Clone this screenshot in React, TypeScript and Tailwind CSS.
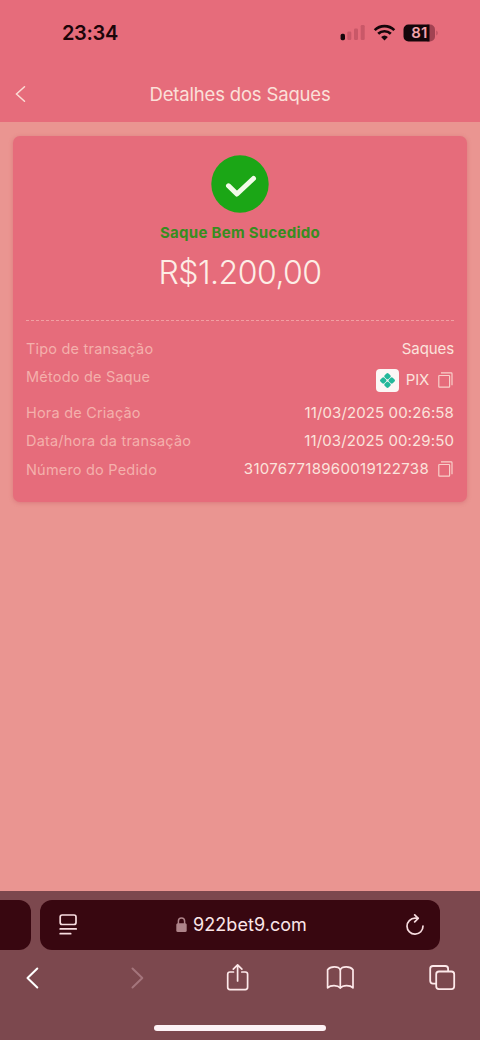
import React from 'react';

const CopyIcon: React.FC = () => (
  <svg className="mr-px" width="15" height="17" viewBox="0 0 15 17" fill="none" stroke="#f8cfc9" strokeWidth="1.2" strokeLinejoin="round">
    <rect x="0.8" y="3.5" width="10.8" height="11.7" rx="0.6" />
    <path d="M3 0.9h10.2q.8 0 .8.8v11.6" />
  </svg>
);

const PixBadge: React.FC = () => (
  <span className="flex h-[23px] w-[23px] items-center justify-center rounded-[4px] bg-[#fbf7f5]">
    <svg width="17" height="17" viewBox="0 0 17 17">
      <g transform="rotate(45 8.5 8.5)" fill="#22b89a">
        <rect x="2.8" y="2.8" width="5.4" height="5.4" rx="1.4" />
        <rect x="8.8" y="2.8" width="5.4" height="5.4" rx="1.4" />
        <rect x="2.8" y="8.8" width="5.4" height="5.4" rx="1.4" />
        <rect x="8.8" y="8.8" width="5.4" height="5.4" rx="1.4" />
      </g>
    </svg>
  </span>
);

const StatusBar: React.FC = () => (
  <div className="flex h-[66px] items-center justify-between pl-[62px] pr-[42px] text-[#1c0509]">
    <span className="text-[20px] font-semibold leading-6 tracking-[-0.35px]">23:34</span>
    <div className="flex items-center">
      <svg width="26" height="18" viewBox="0 0 26 18">
        <rect x="0.6" y="9.8" width="4.4" height="6.4" rx="1.6" fill="#14060a" />
        <g fill="#c95868">
          <rect x="7.3" y="7.5" width="4" height="8.5" rx="1.3" />
          <rect x="14" y="4.5" width="4" height="11.5" rx="1.3" />
          <rect x="20.7" y="1" width="4" height="15" rx="1.3" />
        </g>
      </svg>
      <svg className="ml-[7px]" width="23" height="18" viewBox="0 0 23 18" fill="none" stroke="#14060a" strokeWidth="2.7">
        <path d="M1.7 6.1a14 14 0 0 1 19.6 0" />
        <path d="M5.2 9.8a9 9 0 0 1 12.6 0" />
        <path d="M11.5 16.5l-3.4-3.5a5 5 0 0 1 6.8 0z" fill="#14060a" stroke="none" />
      </svg>
      <svg className="ml-[7px]" width="35" height="18" viewBox="0 0 35 18">
        <path d="M24 0.5h3a5 5 0 0 1 5 5v7a5 5 0 0 1-5 5h-3z" fill="#a24252" />
        <path d="M5.5 0.5H26.5v17H5.5a5 5 0 0 1-5-5v-7a5 5 0 0 1 5-5z" fill="#14060a" />
        <path d="M33 6.5q2 .7 2 2.500t-2 2.500z" fill="#c95868" />
        <text x="16.300" y="14.300" textAnchor="middle" fontSize="15" fontWeight="600" fill="#f3a3aa" fontFamily="Inter, sans-serif">81</text>
      </svg>
    </div>
  </div>
);

const Row: React.FC<{ label: string; tall?: boolean; children: React.ReactNode }> = ({ label, tall, children }) => (
  <div className={tall ? 'flex h-9 items-start justify-between' : 'flex h-[28.2px] items-start justify-between'}>
    <span className="text-[14.5px] leading-7 tracking-[0.2px] text-[#f4b0ac]">{label}</span>
    <div className={tall ? 'flex h-[34px] items-center text-[15px] text-[#fbe3dc]' : 'flex h-7 items-center text-[15px] text-[#fbe3dc]'}>
      {children}
    </div>
  </div>
);

const Toolbar: React.FC = () => (
  <div className="mt-[12px] flex justify-between pl-[17px] pr-[23px]">
    <svg width="30" height="30" viewBox="0 0 30 30" fill="none" stroke="#fff" strokeWidth="2" strokeLinecap="round" strokeLinejoin="round">
      <path d="M20.3 6.500L10.500 16l9.800 9.500" />
    </svg>
    <svg width="30" height="30" viewBox="0 0 30 30" fill="none" stroke="#a4757c" strokeWidth="2" strokeLinecap="round" strokeLinejoin="round">
      <path d="M12.500 6.500l9.800 9.500-9.800 9.500" />
    </svg>
    <svg width="30" height="30" viewBox="0 0 30 30" fill="none" stroke="#fde9ea" strokeWidth="1.7" strokeLinecap="round" strokeLinejoin="round">
      <path d="M11.500 10H8q-2.300 0-2.300 2.300v13q0 2.300 2.300 2.300h15.300q2.300 0 2.300-2.300v-13Q25.600 10 23.300 10H19.800" />
      <path d="M15.600 19V3.200M11.300 7.100l4.300-4.300 4.300 4.300" />
    </svg>
    <svg width="30" height="30" viewBox="0 0 30 30" fill="none" stroke="#fde9ea" strokeWidth="1.7" strokeLinecap="round" strokeLinejoin="round">
      <path d="M15.300 7.800v18" />
      <path d="M15.300 7.800C13.500 4 5.500 4 2.600 7.800v18C5.500 23 12.500 22.800 15.300 25.900C18 22.800 25.200 23 28 25.800v-18C25.200 4 17 4 15.300 7.800z" />
    </svg>
    <svg width="30" height="30" viewBox="0 0 30 30" fill="none" stroke="#fde9ea" strokeWidth="1.8" strokeLinecap="round" strokeLinejoin="round">
      <rect x="9.200" y="9.500" width="18" height="17.600" rx="2.800" />
      <path d="M9 21.600H6q-2.800 0-2.800-2.800V6.800Q3.200 4 6 4h12.300q2.800 0 2.800 2.800V9.100" />
    </svg>
  </div>
);

const BrowserBar: React.FC = () => (
  <footer className="flex h-[149px] flex-col bg-[#7c484e] pt-[9px]">
    <div className="flex gap-[9px]">
      <div className="h-[50px] w-[31px] rounded-r-[12px] bg-[#380710]" />
      <div className="flex h-[50px] w-[400px] items-center justify-between rounded-[12px] bg-[#380710] pl-[19px] pr-[15px]">
        <svg width="19" height="22" viewBox="0 0 19 22" fill="none" stroke="#f7dcdf" strokeWidth="1.7" strokeLinecap="round">
          <rect x="1.200" y="1" width="15.800" height="9.500" rx="2" />
          <path d="M1.200 14.900h16M1.200 19.700h10.500" />
        </svg>
        <div className="flex items-center text-[18px] leading-6 text-[#fbe6e8]">
          <svg className="mr-[6px]" width="11" height="16" viewBox="0 0 11 16">
            <path d="M2.400 7.500V4.100a3.100 3.100 0 0 1 6.200 0v3.400" fill="none" stroke="#ae8389" strokeWidth="1.500" />
            <rect x="0.300" y="6.300" width="10.400" height="8.700" rx="1.500" fill="#ae8389" />
          </svg>
          <span className="tracking-[0.05px]">922bet9.com</span>
        </div>
        <svg width="20" height="22" viewBox="0 0 20 22" fill="none" stroke="#f7dcdf" strokeWidth="1.700" strokeLinecap="round" strokeLinejoin="round">
          <path d="M12.800 4.200H10a8 8 0 1 0 8 7.800" />
          <path d="M9.700 0.900l3.500 3.500-3.500 3.500" />
        </svg>
      </div>
    </div>
    <Toolbar />
    <div className="mx-auto mt-[33px] h-[6px] w-[172px] rounded-full bg-[#fdf2f5]" />
  </footer>
);

const App: React.FC = () => {
  return (
    <div className="flex h-[1040px] w-[480px] flex-col overflow-hidden bg-[#ea9591] font-['Inter',sans-serif]">
      <header className="h-[122px] bg-[#e66c7b]">
        <StatusBar />
        <div className="grid h-14 grid-cols-[40px_1fr_40px] items-center">
          <svg className="ml-[14px]" width="14" height="18" viewBox="0 0 14 18" fill="none" stroke="#fbdcd5" strokeWidth="1.500" strokeLinecap="round">
            <path d="M10.500 1.700L2.500 9l8 7.300" />
          </svg>
          <h1 className="text-center text-[18.500px] leading-6 tracking-[-0.17px] text-[#fbe0d9]">Detalhes dos Saques</h1>
        </div>
      </header>

      <main className="flex-1 px-[13px] pt-[14px]">
        <section className="h-[366px] rounded-[7px] bg-[#e66c7b] px-[13px] pt-[19px] shadow-[0_1px_4px_rgba(190,70,85,0.35)]">
          <div className="flex flex-col items-center">
            <svg width="58" height="58" viewBox="0 0 58 58">
              <circle cx="29" cy="29" r="28.700" fill="#1ba616" />
              <path d="M17.500 30.800l8.400 8.200L42.500 23.500" fill="none" stroke="#f2fbe9" strokeWidth="5" strokeLinecap="round" strokeLinejoin="round" />
            </svg>
            <p className="mt-2 text-[15px] font-bold leading-6 tracking-[0.28px] text-[#378d20]">Saque Bem Sucedido</p>
            <p className="mt-[8px] text-[32px] font-[350] leading-10 tracking-[-0.5px] text-[#fdeee6]">R$1.200,00</p>
          </div>
          <div className="mt-[27px] border-t border-dashed border-[#f0a0a3]" />
          <div className="pt-[14px]">
            <Row label="Tipo de transação">
              <span className="tracking-[-0.1px]">Saques</span>
            </Row>
            <Row label="Método de Saque" tall>
              <PixBadge />
              <span className="ml-[7px] mr-[9px] tracking-[-0.2px]">PIX</span>
              <CopyIcon />
            </Row>
            <Row label="Hora de Criação">
              <span className="tracking-[0.12px]">11/03/2025 00:26:58</span>
            </Row>
            <Row label="Data/hora da transação">
              <span className="tracking-[0.12px]">11/03/2025 00:29:50</span>
            </Row>
            <Row label="Número do Pedido">
              <span className="mr-[9px] tracking-[0.3px]">310767718960019122738</span>
              <CopyIcon />
            </Row>
          </div>
        </section>
      </main>

      <BrowserBar />
    </div>
  );
};

export default App;
